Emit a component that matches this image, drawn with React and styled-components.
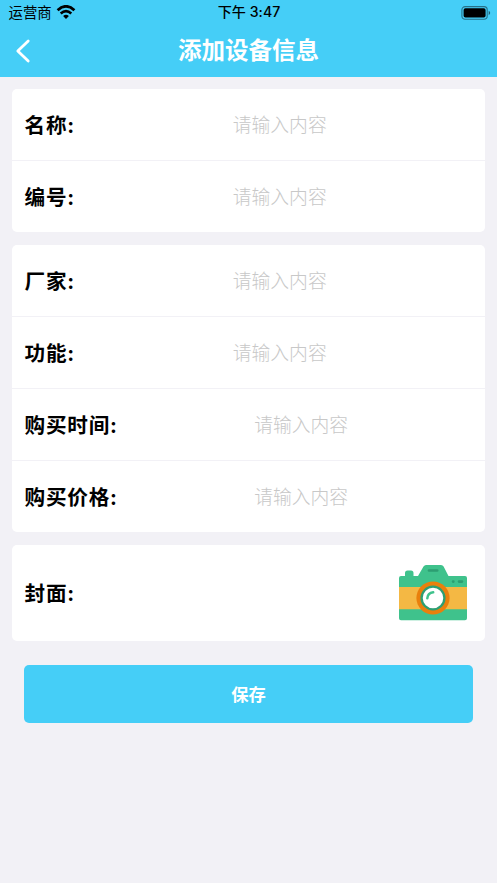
import styled, { createGlobalStyle } from "styled-components";

const GlobalStyle = createGlobalStyle`
  * {
    box-sizing: border-box;
  }

  body {
    margin: 0;
    background-color: #f2f1f6;
    font-family: Inter, "Noto Sans CJK SC", sans-serif;
    color: #000;
  }

  button,
  input {
    font-family: inherit;
    border: none;
    padding: 0;
    background: none;
  }
`;

const Screen = styled.div`
  min-height: 883px;
  background-color: #f2f1f6;
`;

const Header = styled.header`
  height: 77px;
  background-color: #45cef7;
`;

const StatusBar = styled.div`
  height: 25px;
  padding: 0 6px 0 8px;
  display: grid;
  grid-template-columns: 1fr auto 1fr;
  align-items: center;
`;

const Carrier = styled.div`
  height: 25px;
  display: flex;
  align-items: center;
  gap: 4.5px;
  font-size: 14.4px;
  line-height: 24px;

  > span {
    padding-left: 0.5px;
  }

  > svg {
    margin-bottom: 1px;
  }
`;

const Time = styled.div`
  font-size: 14.1px;
  font-weight: 500;
  line-height: 24px;
  padding-right: 1px;
  padding-bottom: 1px;
  letter-spacing: 0.05px;
`;

const Battery = styled.div`
  display: flex;
  justify-content: flex-end;
`;

const NavBar = styled.div`
  height: 52px;
  padding: 0 14px;
  display: grid;
  grid-template-columns: 20px 1fr 20px;
  align-items: center;
`;

const BackButton = styled.button`
  height: 26px;
  display: flex;
  align-items: center;
`;

const Title = styled.h1`
  margin: 0;
  text-align: center;
  color: #fff;
  font-size: 23.5px;
  font-weight: 700;
  line-height: 50px;
`;

const Form = styled.form`
  padding: 12px 12.5px 0 12px;
  display: flex;
  flex-direction: column;
  gap: 13px;
`;

const Card = styled.section`
  background-color: #fff;
  border-radius: 5px;
  overflow: hidden;
`;

const Row = styled.label`
  height: ${(props) => props.$height}px;
  padding-left: 12.5px;
  border-bottom: ${(props) => (props.$last ? "none" : "1px solid #f2f1f6")};

  display: flex;
  align-items: center;
`;

const Label = styled.span`
  padding-top: 2px;
  font-size: 20.6px;
  font-weight: 700;
  line-height: 30px;
  letter-spacing: 0.8px;
  white-space: nowrap;
`;

const Input = styled.input`
  flex: 1;
  min-width: 0;
  height: 40px;
  padding-top: 2px;
  text-align: center;
  font-size: 18.8px;
  font-weight: 300;
  outline: none;

  &::placeholder {
    color: #c8c8c8;
    opacity: 1;
  }
`;

const CoverButton = styled.button`
  margin-left: auto;
  margin-right: 17px;
  margin-bottom: 2px;
  height: 58px;

  > svg {
    display: block;
  }
`;

const SaveButton = styled.button`
  height: 58.5px;
  margin: 11px 11.5px 0 12px;
  border-radius: 5px;
  background-color: #45cef7;
  color: #fff;
  font-size: 17.3px;
  font-weight: 700;
`;

function WifiIcon() {
  return (
    <svg width="20" height="15" viewBox="0 0 20 15" fill="none">
      <path d="M1.6 5.2Q10-2.5 18.4 5.2" stroke="#000" strokeWidth="2.8" />
      <path d="M4.7 8.4Q10 3.8 15.3 8.4" stroke="#000" strokeWidth="2.6" />
      <path d="M7.1 11Q10 8.6 12.9 11L10 14Z" fill="#000" />
    </svg>
  );
}

function BatteryIcon() {
  return (
    <svg width="30" height="14" viewBox="0 0 30 14">
      <rect
        x="0.9"
        y="0.6"
        width="25.3"
        height="12.6"
        rx="3.2"
        fill="none"
        stroke="#000"
        strokeOpacity="0.45"
        strokeWidth="1.1"
      />
      <rect x="2.6" y="2.3" width="22" height="9.2" rx="1.8" fill="#000" />
      <path d="M27.7 4.8Q30.7 7 27.7 9.2Z" fill="#000" fillOpacity="0.55" />
    </svg>
  );
}

function CameraIcon() {
  return (
    <svg width="70" height="58" viewBox="0 0 70 58">
      <path
        fill="#3fc28c"
        d="M3 13H7V10Q7 7.5 9.5 7.5H13Q15.5 7.5 15.5 10V13H20L25.5 3.5Q26.5 2 28 2H43Q44.8 2 45.6 3.5L50.5 13H67Q69 13 69 15V55.3Q69 57.3 67 57.3H3Q1 57.3 1 55.3V15Q1 13 3 13Z"
      />
      <path fill="#f4b844" d="M1 24H69V46.2H1Z" />
      <g stroke="#2d9e72" strokeWidth="2.6" strokeLinecap="round">
        <path d="M31 7.5H39.2" />
        <path d="M55.1 18.6H55.4M61 18.6H64" />
      </g>
      <circle cx="35" cy="35" r="16.6" fill="#e9800c" />
      <circle cx="35" cy="35" r="11.4" fill="#fff" stroke="#2d9e72" strokeWidth="2.3" />
      <path
        d="M29.3 35.3Q29.7 30 35.2 29.3"
        fill="none"
        stroke="#3fc28c"
        strokeWidth="2.5"
        strokeLinecap="round"
      />
    </svg>
  );
}

function Field({ label, last }) {
  return (
    <Row $height={last ? 71 : 72} $last={last}>
      <Label>{label}:</Label>
      <Input type="text" placeholder="请输入内容" />
    </Row>
  );
}

function App() {
  return (
    <Screen>
      <GlobalStyle />
      <Header>
        <StatusBar>
          <Carrier>
            <span>运营商</span>
            <WifiIcon />
          </Carrier>
          <Time>下午 3:47</Time>
          <Battery>
            <BatteryIcon />
          </Battery>
        </StatusBar>

        <NavBar>
          <BackButton type="button" aria-label="返回">
            <svg width="18" height="26" viewBox="0 0 18 26" fill="none">
              <path
                d="M14.2 3L3.8 13L14.2 23"
                stroke="#fff"
                strokeWidth="2.8"
                strokeLinecap="round"
                strokeLinejoin="round"
              />
            </svg>
          </BackButton>
          <Title>添加设备信息</Title>
        </NavBar>
      </Header>

      <Form>
        <Card>
          <Field label="名称" />
          <Field label="编号" last />
        </Card>

        <Card>
          <Field label="厂家" />
          <Field label="功能" />
          <Field label="购买时间" />
          <Field label="购买价格" last />
        </Card>

        <Card>
          <Row as="div" $height={95.5} $last>
            <Label>封面:</Label>
            <CoverButton type="button" aria-label="封面">
              <CameraIcon />
            </CoverButton>
          </Row>
        </Card>

        <SaveButton type="button">保存</SaveButton>
      </Form>
    </Screen>
  );
}

export default App;
